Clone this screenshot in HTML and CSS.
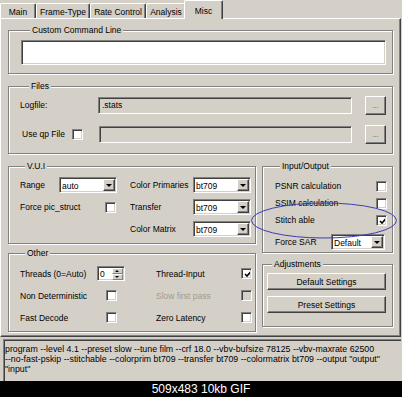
FILE: index.html
```html
<!DOCTYPE html>
<html lang="en">

<head>
    <meta charset="UTF-8">
    <title>Misc settings</title>
    <link rel="stylesheet" href="styles.css">
</head>

<body>
    <div class="shot">
        <div class="dialog">
            <div class="tabs">
                <div class="tab tab-main">Main</div>
                <div class="tab tab-frame">Frame-Type</div>
                <div class="tab tab-rate">Rate Control</div>
                <div class="tab tab-analysis">Analysis</div>
                <div class="tab tab-misc active">Misc</div>
            </div>

            <div class="panel">
                <fieldset class="group g-custom">
                    <legend>Custom Command Line</legend>
                    <div class="edit big"></div>
                </fieldset>

                <fieldset class="group g-files">
                    <legend>Files</legend>
                    <div class="file-row">
                        <span class="lbl-log">Logfile:</span>
                        <div class="edit field">.stats</div>
                        <div class="btn dots">...</div>
                    </div>
                    <div class="file-row">
                        <span class="lbl-qp">Use qp File</span>
                        <span class="check"></span>
                        <div class="edit field qp"></div>
                        <div class="btn dots">...</div>
                    </div>
                </fieldset>

                <div class="columns">
                    <div class="col">
                        <fieldset class="group g-vui">
                            <legend>V.U.I</legend>
                            <div class="vui-grid">
                                <span>Range</span>
                                <div class="combo"><span>auto</span><i class="drop"></i></div>
                                <span>Color Primaries</span>
                                <div class="combo"><span>bt709</span><i class="drop"></i></div>

                                <span>Force pic_struct</span>
                                <span class="check end"></span>
                                <span>Transfer</span>
                                <div class="combo"><span>bt709</span><i class="drop"></i></div>

                                <span></span>
                                <span></span>
                                <span>Color Matrix</span>
                                <div class="combo"><span>bt709</span><i class="drop"></i></div>
                            </div>
                        </fieldset>

                        <fieldset class="group g-other">
                            <legend>Other</legend>
                            <div class="other-grid">
                                <span>Threads (0=Auto)</span>
                                <div class="spin"><span>0</span><i class="spin-btns"><b class="up"></b><b class="down"></b></i></div>
                                <span>Thread-Input</span>
                                <span class="check on"></span>

                                <span>Non Deterministic</span>
                                <span class="check shift"></span>
                                <span class="disabled">Slow first pass</span>
                                <span class="check off"></span>

                                <span>Fast Decode</span>
                                <span class="check shift"></span>
                                <span>Zero Latency</span>
                                <span class="check"></span>
                            </div>
                        </fieldset>
                    </div>

                    <div class="col">
                        <fieldset class="group g-io">
                            <legend>Input/Output</legend>
                            <div class="io-row"><span>PSNR calculation</span><span class="check"></span></div>
                            <div class="io-row"><span>SSIM calculation</span><span class="check"></span></div>
                            <div class="io-row"><span>Stitch able</span><span class="check on"></span></div>
                            <div class="io-row sar"><span>Force SAR</span>
                                <div class="combo small"><span>Default</span><i class="drop"></i></div>
                            </div>
                        </fieldset>

                        <fieldset class="group g-adj">
                            <legend>Adjustments</legend>
                            <div class="btn wide">Default Settings</div>
                            <div class="btn wide">Preset Settings</div>
                        </fieldset>
                    </div>
                </div>
            </div>

            <div class="cmdline">
                <div>program --level 4.1 --preset slow --tune film --crf 18.0 --vbv-bufsize 78125 --vbv-maxrate 62500</div>
                <div>--no-fast-pskip --stitchable --colorprim bt709 --transfer bt709 --colormatrix bt709 --output "output"</div>
                <div>"input"</div>
            </div>
        </div>

        <div class="caption">509x483 10kb GIF</div>

        <!-- hand drawn annotation ring -->
        <svg class="ring" width="150" height="38" viewBox="0 0 150 38">
            <ellipse cx="74" cy="18.5" rx="72.5" ry="17.5" fill="none" stroke="#3d3db8" stroke-width="1"/>
        </svg>
    </div>
</body>

</html>
```

FILE: styles.css
```css
body {
    margin: 0;
    background: #d4d0c8;
    font-family: "Liberation Sans", Arial, sans-serif;
    font-size: 8.5px;
    color: #000;
}

.shot {
    position: relative;
    width: 402px;
    height: 397px;
    overflow: hidden;
}

.dialog {
    height: 381px;
    display: flex;
    flex-direction: column;
}

/* tabs */

.tabs {
    display: flex;
    align-items: flex-end;
    height: 18px;
}

.tab {
    box-sizing: border-box;
    height: 15px;
    padding-top: 3px;
    line-height: 10px;
    text-align: center;
    white-space: nowrap;
    border-top: 1px solid #fff;
    border-left: 1px solid #fff;
    border-right: 1px solid #404040;
    border-radius: 2px 2px 0 0;
    box-shadow: inset -1px 0 #808080;
}

.tab-main { width: 36px; }
.tab-frame { width: 54px; }
.tab-rate { width: 56px; }
.tab-analysis { width: 40px; }

.tab.active {
    position: relative;
    z-index: 1;
    width: 39px;
    height: 19px;
    margin-left: -2px;
    margin-bottom: -1px;
    padding-top: 5px;
    background: #d4d0c8;
}

/* main panel */

.panel {
    box-sizing: border-box;
    width: 401px;
    padding-bottom: 4px;
    border-top: 1px solid #fff;
    border-left: 1px solid #fff;
    border-right: 1px solid #404040;
    border-bottom: 1px solid #404040;
    box-shadow: inset -1px -1px #808080;
}

.group {
    box-sizing: border-box;
    margin: 0 0 0 7px;
    padding: 0;
    min-width: 0;
    border: 1px solid #808080;
    box-shadow: inset 1px 1px #fff, 1px 1px #fff;
}

.group legend {
    padding: 0 2px;
    margin-left: 5px;
    line-height: 10px;
    background: #d4d0c8;
}

.g-custom {
    width: 385px;
    margin-top: 6px;
    padding: 5px 6px 8px 12px;
}

.g-custom legend,
.g-files legend {
    margin-left: 9px;
}

.g-files {
    width: 385px;
    margin-top: 7px;
    padding: 4px 6px 9px 11px;
}

.file-row {
    display: flex;
    align-items: center;
    height: 20px;
}

.file-row + .file-row {
    margin-top: 9px;
}

.lbl-log {
    width: 78px;
}

.lbl-qp {
    width: 50px;
    margin-left: 2px;
}

.lbl-qp + .check {
    margin-right: 16px;
}

/* sunken edit look */

.edit {
    box-sizing: border-box;
    background: #fff;
    border-top: 1px solid #808080;
    border-left: 1px solid #808080;
    border-bottom: 1px solid #fff;
    border-right: 1px solid #fff;
    box-shadow: inset 1px 1px #404040, inset -1px -1px #d4d0c8;
}

.edit.big {
    height: 25px;
}

.edit.field {
    width: 254px;
    height: 17px;
    padding: 0 3px;
    line-height: 15px;
    background: #d4d0c8;
}

.btn {
    box-sizing: border-box;
    display: flex;
    align-items: center;
    justify-content: center;
    border-top: 1px solid #fff;
    border-left: 1px solid #fff;
    border-right: 1px solid #404040;
    border-bottom: 1px solid #404040;
    box-shadow: inset -1px -1px #808080;
}

.btn.dots {
    width: 21px;
    height: 19px;
    margin-left: 13px;
    font-size: 7px;
    color: #444;
}

/* two columns */

.columns {
    display: flex;
    gap: 6px;
    margin: 7px 0 0 7px;
}

.col {
    display: flex;
    flex-direction: column;
}

.col .group {
    margin-left: 0;
}

.g-vui,
.g-other {
    width: 248px;
}

.g-io,
.g-adj {
    width: 131px;
}

.g-vui {
    padding: 6px 4px 6px 11px;
}

.vui-grid {
    display: grid;
    grid-template-columns: 39px 58px 76px 58px;
    grid-auto-rows: 16px;
    row-gap: 6px;
    align-items: center;
    white-space: nowrap;
}

.vui-grid > :nth-child(4n+3) {
    margin-left: 13px;
}

.g-other {
    margin-top: 4px;
    padding: 8px 3px 6px 11px;
}

.other-grid {
    display: grid;
    grid-template-columns: 77px 28px 31px 85px 11px;
    grid-auto-rows: 15px;
    row-gap: 7px;
    align-items: center;
    white-space: nowrap;
}

.other-grid > :nth-child(4n+3) {
    grid-column: 4;
}

.other-grid > :nth-child(4n+4) {
    grid-column: 5;
}

.g-io {
    padding: 9px 5px 2px 12px;
}

.io-row {
    display: flex;
    justify-content: space-between;
    align-items: center;
    height: 12px;
    margin-bottom: 5px;
}

.io-row.sar {
    height: 16px;
    margin: 8px 0 0;
}

.g-adj {
    margin-top: 6px;
    padding: 4px 6px 13px 4px;
}

.btn.wide {
    height: 17px;
}

.btn.wide + .btn.wide {
    margin-top: 6px;
}

/* checkboxes */

.check {
    box-sizing: border-box;
    display: inline-block;
    width: 11px;
    height: 11px;
    background: #fff;
    border-top: 1px solid #808080;
    border-left: 1px solid #808080;
    border-bottom: 1px solid #fff;
    border-right: 1px solid #fff;
    box-shadow: inset 1px 1px #404040, inset -1px -1px #d4d0c8;
}

.check.on {
    background: #fff url("data:image/svg+xml,%3Csvg xmlns='http://www.w3.org/2000/svg' width='7' height='7'%3E%3Cpath d='M1 3 L3 5 L6.5 1' fill='none' stroke='%23000' stroke-width='1.6'/%3E%3C/svg%3E") no-repeat 2px 2px;
}

.check.off {
    background: #d4d0c8;
}

.check.end {
    justify-self: end;
    margin-right: 1px;
}

.check.shift {
    margin-left: 9px;
}

.disabled {
    color: #a09c94;
}

/* combo boxes */

.combo {
    box-sizing: border-box;
    display: flex;
    align-items: center;
    height: 16px;
    padding: 0 0 0 2px;
    background: #fff;
    border-top: 1px solid #808080;
    border-left: 1px solid #808080;
    border-bottom: 1px solid #fff;
    border-right: 1px solid #fff;
    box-shadow: inset 1px 1px #404040, inset -1px -1px #d4d0c8;
}

.combo span {
    flex: 1;
    padding-top: 1px;
}

.combo.small {
    width: 54px;
    margin-right: 2px;
}

.drop {
    box-sizing: border-box;
    position: relative;
    width: 12px;
    height: 12px;
    margin-right: 1px;
    background: #d4d0c8;
    border-top: 1px solid #fff;
    border-left: 1px solid #fff;
    border-right: 1px solid #404040;
    border-bottom: 1px solid #404040;
    box-shadow: inset -1px -1px #808080;
}

.drop::after {
    content: "";
    position: absolute;
    left: 2px;
    top: 4px;
    border-left: 3px solid transparent;
    border-right: 3px solid transparent;
    border-top: 3px solid #000;
}

/* spin box */

.spin {
    box-sizing: border-box;
    display: flex;
    align-items: center;
    width: 28px;
    height: 15px;
    padding-left: 2px;
    background: #fff;
    border-top: 1px solid #808080;
    border-left: 1px solid #808080;
    border-bottom: 1px solid #fff;
    border-right: 1px solid #fff;
    box-shadow: inset 1px 1px #404040, inset -1px -1px #d4d0c8;
}

.spin span {
    flex: 1;
}

.spin-btns {
    display: flex;
    flex-direction: column;
    width: 11px;
    height: 12px;
    margin-right: 1px;
}

.spin-btns b {
    position: relative;
    flex: 1;
    background: #d4d0c8;
    border-top: 1px solid #fff;
    border-left: 1px solid #fff;
    border-right: 1px solid #808080;
    border-bottom: 1px solid #808080;
}

.spin-btns b::after {
    content: "";
    position: absolute;
    left: 2px;
    top: 1px;
    border-left: 2px solid transparent;
    border-right: 2px solid transparent;
}

.spin-btns .up::after {
    border-bottom: 2px solid #000;
}

.spin-btns .down::after {
    border-top: 2px solid #000;
}

/* command preview */

.cmdline {
    flex: 1;
    box-sizing: border-box;
    margin: 2px 1px 0 3px;
    padding: 4px 0 0 1px;
    font-size: 8.8px;
    line-height: 10px;
    white-space: nowrap;
    overflow: hidden;
    border-top: 1px solid #808080;
    border-left: 1px solid #808080;
    box-shadow: inset 1px 1px #404040;
}

.caption {
    height: 16px;
    background: #000;
    color: #fff;
    font-size: 12px;
    line-height: 16px;
    text-align: center;
}

.ring {
    position: absolute;
    left: 250px;
    top: 202px;
}
```
